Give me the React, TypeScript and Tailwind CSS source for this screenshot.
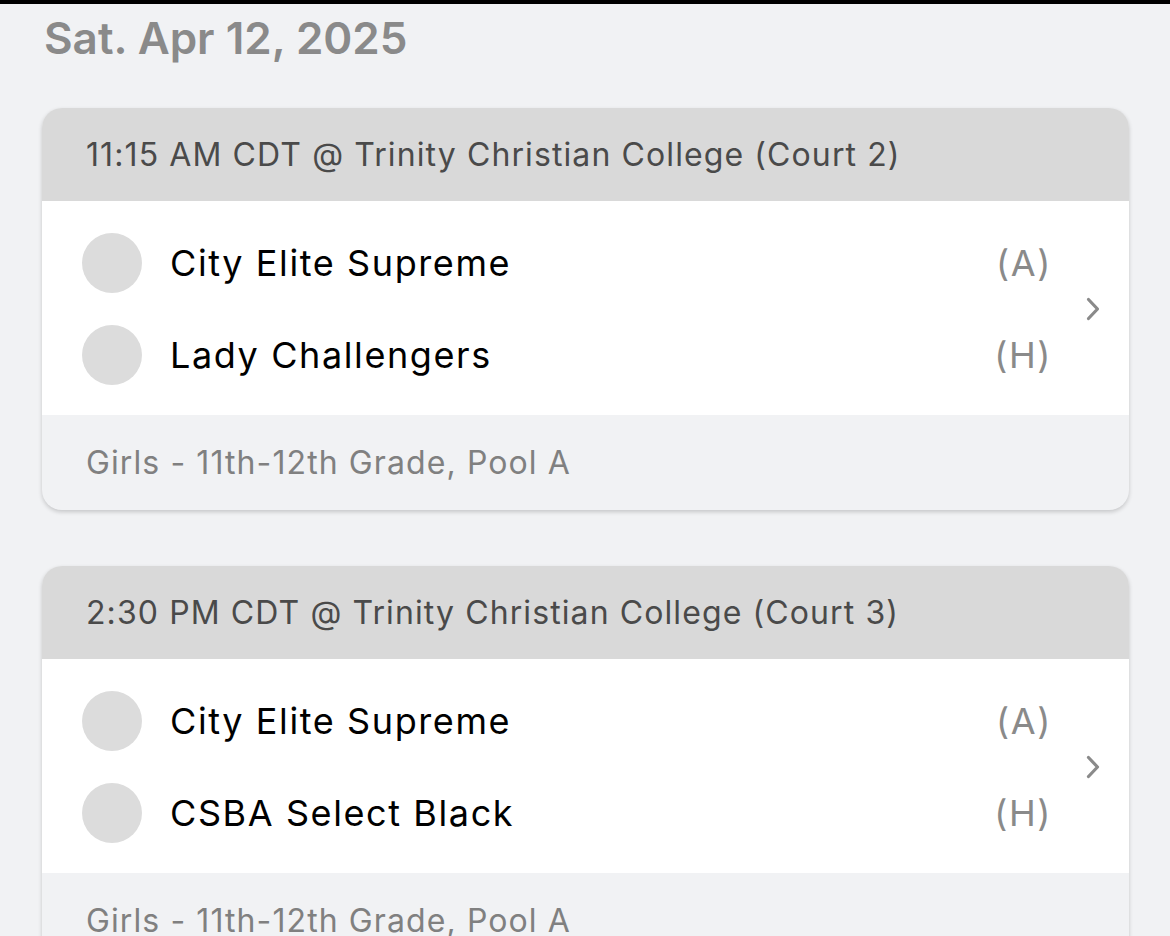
const GAMES = [
  {
    time: "11:15 AM CDT @ Trinity Christian College (Court 2)",
    teams: [
      { name: "City Elite Supreme", side: "(A)" },
      { name: "Lady Challengers", side: "(H)" },
    ],
    division: "Girls - 11th-12th Grade, Pool A",
  },
  {
    time: "2:30 PM CDT @ Trinity Christian College (Court 3)",
    teams: [
      { name: "City Elite Supreme", side: "(A)" },
      { name: "CSBA Select Black", side: "(H)" },
    ],
    division: "Girls - 11th-12th Grade, Pool A",
  },
]

type Game = (typeof GAMES)[number]

function GameCard({ game }: { game: Game }) {
  return (
    <div className="rounded-[20px] overflow-hidden bg-[#f1f2f4] shadow-[0_2px_4px_rgba(0,0,0,0.18)]">
      <div className="h-[93px] flex items-center px-[44px] bg-[#d9d9d9] text-[32px] tracking-[1.1px] text-[#4a4a4a]">
        {game.time}
      </div>
      <div className="bg-white flex pt-[16px] pb-[14px]">
        <div className="flex-1 flex flex-col">
          {game.teams.map((t) => (
            <div key={t.name} className="h-[92px] flex items-center pl-[40px] text-[36px] tracking-[1.6px]">
              <span className="w-[60px] h-[60px] rounded-full bg-[#dcdcdc] shrink-0" />
              <span className="ml-[28px] text-black flex-1">{t.name}</span>
              <span className="text-[#8a8a8a] -mr-[2px]">{t.side}</span>
            </div>
          ))}
        </div>
        <div className="w-[79px] flex items-center justify-center pl-[6px]">
          <svg width="16" height="26" viewBox="0 0 16 26" fill="none">
            <path d="M3.5 3.5l9 9.5-9 9.5" stroke="#8a8a8a" strokeWidth="3.2" strokeLinecap="round" strokeLinejoin="round" />
          </svg>
        </div>
      </div>
      <div className="h-[95px] flex items-center px-[44px] text-[32px] tracking-[1.1px] text-[#808080]">
        {game.division}
      </div>
    </div>
  )
}

export default function App() {
  return (
    <div className="min-h-[936px] bg-[#f1f2f4] font-['Inter',sans-serif] overflow-hidden">
      <div className="h-[4px] bg-black" />
      <div className="pl-[44px] pt-[9px] text-[44px] leading-[50px] font-semibold text-[#8a8a8a]">
        Sat. Apr 12, 2025
      </div>
      <div className="flex flex-col gap-[56px] pl-[42px] pr-[41px] mt-[45px]">
        {GAMES.map((g) => (
          <GameCard key={g.time} game={g} />
        ))}
      </div>
    </div>
  )
}
